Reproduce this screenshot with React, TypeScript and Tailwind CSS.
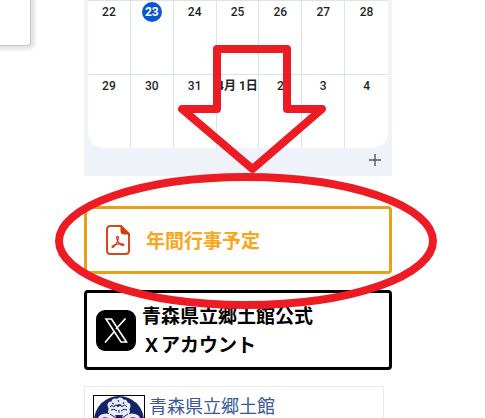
import React from "react";

const WEEKS: string[][] = [
  ["22", "23", "24", "25", "26", "27", "28"],
  ["29", "30", "31", "4月 1日", "2", "3", "4"],
];

const TODAY = "23";

function Calendar() {
  return (
    <section className="h-44 bg-[#eff3f9] px-1">
      <div className="h-[148px] overflow-hidden rounded-b-2xl bg-white">
        {WEEKS.map((week) => (
          <div
            key={week[0]}
            className="grid h-[74px] grid-cols-7 border-t border-[#dde3ea] font-['Roboto','Noto_Sans_CJK_JP',sans-serif] text-xs font-medium text-[#1f1f1f]"
          >
            {week.map((day) => (
              <div
                key={day}
                className="flex justify-center border-r border-[#dde3ea] pt-px last:border-r-0"
              >
                {day === TODAY ? (
                  <span className="flex size-5 items-center justify-center rounded-full bg-[#0b57d0] font-bold text-white">
                    {day}
                  </span>
                ) : (
                  <span
                    className={
                      day.includes("月")
                        ? "h-5 leading-5 font-bold whitespace-nowrap"
                        : "h-5 leading-5 whitespace-nowrap"
                    }
                  >
                    {day}
                  </span>
                )}
              </div>
            ))}
          </div>
        ))}
      </div>
      <div className="flex justify-end pt-1 pr-[5px]">
        <button type="button" aria-label="カレンダーを追加" className="size-4">
          <svg viewBox="0 0 16 16" className="size-4" fill="none" stroke="#555" strokeWidth="1.4">
            <path d="M8 2v12M2 8h12" />
          </svg>
        </button>
      </div>
    </section>
  );
}

function PdfIcon() {
  return (
    <svg viewBox="0 0 24 30" className="h-[30px] w-6 shrink-0" fill="none">
      <path
        d="M4.500 1H15l8 8v16.500q0 3.500-3.500 3.500h-15Q1 29 1 25.500v-21Q1 1 4.500 1z"
        stroke="#d4481c"
        strokeWidth="2"
      />
      <path d="M15 1v5.500q0 2.500 2.500 2.500H23z" fill="#d83b01" stroke="#d83b01" strokeWidth="1" />
      <path
        d="M11.500 11.500c-1.500 0-.7 3 .6 5.200 1.500 2.400 4 4 5.400 3.500 1.200-.6-.4-1.700-3.500-1.400-3.200.2-6.500 1.200-7.700 2.500-.7.900.2 1.400 1.200.6 1.700-1.300 4.200-5.600 4.900-8.500.2-1.200 0-1.900-.9-1.900z"
        stroke="#cf4420"
        strokeWidth="1.300"
      />
    </svg>
  );
}

function XIcon() {
  return (
    <svg viewBox="0 0 40 41" className="h-[41px] w-10 shrink-0">
      <rect width="40" height="41" rx="9" />
      <path d="M10 9h5.500l15 23H25z" fill="none" stroke="#fff" strokeWidth="1.600" />
      <path d="M29.500 8.500l-9.500 10.500M18 22l-9 10.500" stroke="#fff" strokeWidth="1.700" />
    </svg>
  );
}

function Crest() {
  return (
    <svg viewBox="0 0 52 52" className="size-[52px] shrink-0">
      <rect x=".5" y=".5" width="51" height="51" fill="#fff" stroke="#000" />
      <circle cx="26" cy="26" r="25" fill="#14246b" />
      <g fill="#e9edf8">
        <circle cx="18" cy="10" r="3.500" />
        <circle cx="22" cy="7" r="3.500" />
        <circle cx="27" cy="6" r="3.500" />
        <circle cx="31" cy="8" r="3.500" />
        <circle cx="34" cy="11" r="3.500" />
        <path d="M16 11h20l1 6-4 7H19l-4-7z" />
        <ellipse cx="13" cy="24" rx="8" ry="5.500" />
        <ellipse cx="39" cy="24" rx="8" ry="5.500" />
        <path d="M16 22h20v20H16z" />
      </g>
      <g fill="none" stroke="#14246b">
        <path d="M17 12q2-3 4 0 2-4 4 0 2-4 4 0 2-4 5 0M19 8l2 1M25 5l1 2M31 7l-1 2" />
        <path d="M18 15q3-2 6 1M28 16q3-3 6-1M26 15v3" />
        <path d="M17 19q9 8 18 0M8 24q5-3 9 1M35 25q4-4 9-1" />
      </g>
      <path d="M22 20h8l-2 3h-4z" fill="#14246b" />
    </svg>
  );
}

function Annotation() {
  return (
    <svg
      viewBox="0 0 485 418"
      className="pointer-events-none absolute top-0 left-0 h-[418px] w-[485px]"
      fill="none"
      stroke="#ed1c24"
      strokeWidth="8"
      strokeLinejoin="round"
      aria-hidden="true"
    >
      <path d="M217 49h70v60h35l-69.500 60L182 109h35z" />
      <ellipse cx="246" cy="241" rx="187" ry="64" />
    </svg>
  );
}

export default function App() {
  return (
    <div className="relative flex h-screen items-start overflow-hidden bg-white font-['Noto_Sans_CJK_JP',sans-serif]">
      <aside className="mr-[53px] h-[46px] w-[31px] shrink-0 rounded-br-sm border-r border-b border-[#c4c4c4] bg-white shadow-[1px_1px_3px_3px_#e6e6e6]" />
      <main className="mr-[93px] min-w-0 flex-1">
        <Calendar />
        <a
          href="#schedule"
          className="mt-[30px] flex h-[68px] items-center gap-4 rounded border-3 border-[#e6a01a] pl-[19px] text-[19px] font-bold text-[#faa61a]"
        >
          <PdfIcon />
          年間行事予定
        </a>
        <a
          href="#x"
          className="mt-4 flex h-20 items-center gap-1.5 rounded border-3 border-black pl-[9px] text-[19px] leading-[29px] font-bold text-black"
        >
          <XIcon />
          <span className="pb-0.5 whitespace-nowrap">
            青森県立郷土館公式
            <br />
            Ｘアカウント
          </span>
        </a>
        <section className="mt-4 mr-2 flex gap-1 border border-[#e9ebee] p-2">
          <Crest />
          <a href="#facebook" className="text-lg leading-5 whitespace-nowrap text-[#385898]">
            青森県立郷土館
          </a>
        </section>
      </main>
      <Annotation />
    </div>
  );
}
